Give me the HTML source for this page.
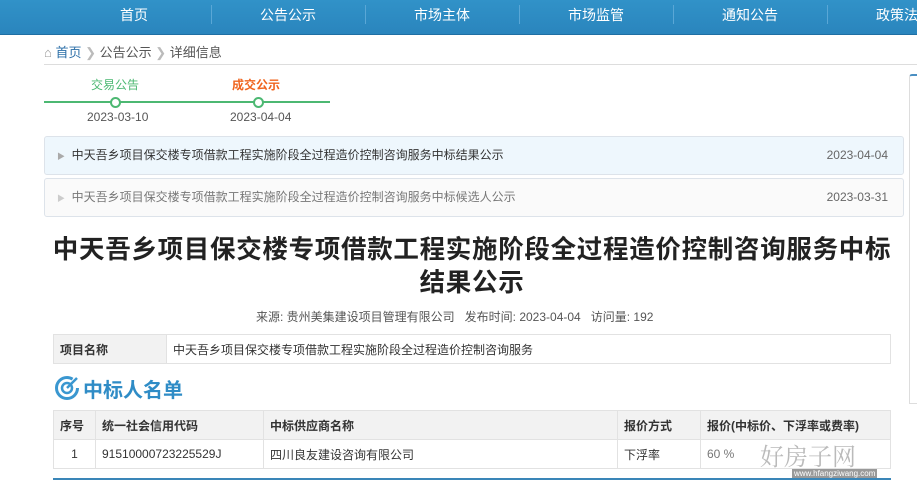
<!DOCTYPE html>
<html><head><meta charset="utf-8"><style>
*{margin:0;padding:0;box-sizing:border-box}
body{width:917px;height:480px;overflow:hidden;background:#fff;font-family:"Liberation Sans","Noto Sans CJK SC",sans-serif;font-size:13px;color:#333;position:relative}
.nav{position:absolute;left:0;top:0;width:917px;height:35px;background:linear-gradient(#3192c8,#2a85bd);border-bottom:1px solid #1f6fa3}
.nav span{position:absolute;top:0;line-height:31px;color:#fff;font-size:14px;width:154px;text-align:center}
.nav i{position:absolute;top:5px;width:1px;height:19px;background:#5aa7d6}
.abs{position:absolute;white-space:nowrap}
.bc{left:44px;top:42px;font-size:13px;color:#555}
.line{left:44px;top:64px;width:873px;height:1px;background:#ddd}
.box{position:absolute;left:44px;width:860px;height:39px;border:1px solid #dde3ea;border-radius:3px;line-height:37px;font-size:12px}
.circ{position:absolute;top:97px;width:11px;height:11px;border:2px solid #4cb872;border-radius:50%;background:#fff}
table{position:absolute;border-collapse:collapse;font-size:12px}
td{border:1px solid #e2e2e2;height:29px;padding:0 6px}
</style></head><body>
<div class="nav">
<span style="left:57px">首页</span><i style="left:211px"></i>
<span style="left:211px">公告公示</span><i style="left:365px"></i>
<span style="left:365px">市场主体</span><i style="left:519px"></i>
<span style="left:519px">市场监管</span><i style="left:673px"></i>
<span style="left:673px">通知公告</span><i style="left:827px"></i>
<span style="left:827px">政策法规</span>
</div>
<div class="abs bc"><span style="color:#999">&#8962;</span> <span style="color:#2c6fa8">首页</span> <span style="color:#bbb">❯</span> 公告公示 <span style="color:#bbb">❯</span> 详细信息</div>
<div class="abs line"></div>
<div class="abs" style="left:91px;top:76px;color:#4cb872;font-size:12px">交易公告</div>
<div class="abs" style="left:232px;top:76px;color:#f0641e;font-size:12px;font-weight:bold">成交公示</div>
<div class="abs" style="left:44px;top:101px;width:286px;height:2px;background:#4cb872"></div>
<div class="circ" style="left:110px"></div>
<div class="circ" style="left:253px"></div>
<div class="abs" style="left:87px;top:110px;font-size:12px;color:#555">2023-03-10</div>
<div class="abs" style="left:230px;top:110px;font-size:12px;color:#555">2023-04-04</div>
<div class="abs" style="left:909px;top:74px;width:8px;height:330px;border:1px solid #ddd;border-top:2px solid #4a8fc2;border-right:none;border-radius:3px 0 0 0"></div>
<div class="box" style="top:136px;background:#eef7fd;color:#333"><span style="color:#aaa;margin-left:12px;font-size:8px">▶</span>&nbsp; 中天吾乡项目保交楼专项借款工程实施阶段全过程造价控制咨询服务中标结果公示<span style="position:absolute;right:15px;color:#666">2023-04-04</span></div>
<div class="box" style="top:178px;background:#fafafa;color:#777"><span style="color:#ccc;margin-left:12px;font-size:8px">▶</span>&nbsp; 中天吾乡项目保交楼专项借款工程实施阶段全过程造价控制咨询服务中标候选人公示<span style="position:absolute;right:15px;color:#666">2023-03-31</span></div>
<div class="abs" style="left:30px;top:234px;width:884px;text-align:center;font-size:25.5px;letter-spacing:0.7px;font-weight:bold;line-height:33px;color:#222;white-space:normal">中天吾乡项目保交楼专项借款工程实施阶段全过程造价控制咨询服务中标<br>结果公示</div>
<div class="abs" style="left:256px;top:308px;font-size:12px;color:#555">来源: 贵州美集建设项目管理有限公司&nbsp;&nbsp;&nbsp;发布时间: 2023-04-04&nbsp;&nbsp;&nbsp;访问量: 192</div>
<table style="left:53px;top:334px;width:838px"><tr><td style="width:113px;background:#f2f2f2;font-weight:bold">项目名称</td><td>中天吾乡项目保交楼专项借款工程实施阶段全过程造价控制咨询服务</td></tr></table>
<svg class="abs" style="left:54px;top:375px" width="26" height="26" viewBox="0 0 26 26"><circle cx="13" cy="13" r="10.5" fill="none" stroke="#3a97d0" stroke-width="3" stroke-dasharray="55 12"/><circle cx="13" cy="13" r="5" fill="none" stroke="#3a97d0" stroke-width="2.5"/><path d="M13 13 L23 3" stroke="#3a97d0" stroke-width="2.5"/></svg>
<div class="abs" style="left:83px;top:374px;font-size:20px;font-weight:bold;color:#2f8cc6">中标人名单</div>
<table style="left:53px;top:410px;width:838px">
<tr style="background:#f2f2f2;font-weight:bold"><td style="width:42px">序号</td><td style="width:168px">统一社会信用代码</td><td style="width:354px">中标供应商名称</td><td style="width:83px">报价方式</td><td>报价(中标价、下浮率或费率)</td></tr>
<tr><td style="text-align:center">1</td><td>91510000723225529J</td><td>四川良友建设咨询有限公司</td><td>下浮率</td><td style="color:#777">60 %</td></tr>
</table>
<div class="abs" style="left:53px;top:478px;width:838px;height:2px;background:#3a86b8"></div>
<div class="abs" style="left:760px;top:437px;font-size:24px;color:#aaa;opacity:.8;font-family:'Noto Serif CJK SC',serif">好房子网</div>
<div class="abs" style="left:792px;top:469px;font-size:8px;color:#fff;background:#999;padding:0 2px">www.hfangziwang.com</div>
</body></html>
